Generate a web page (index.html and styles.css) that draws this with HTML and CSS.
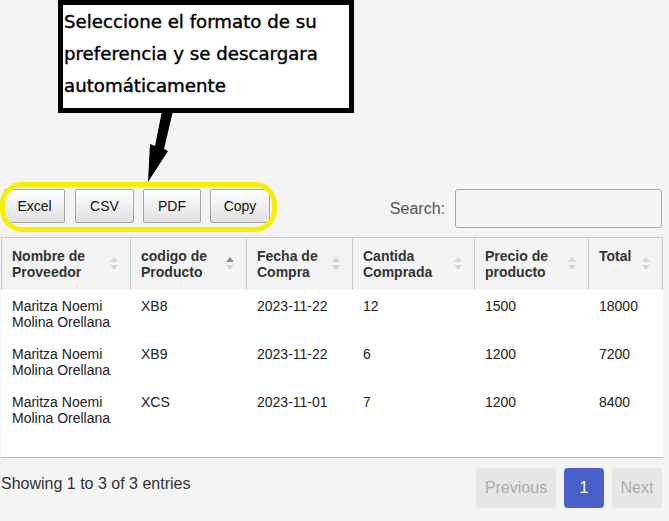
FILE: index.html
```html
<!DOCTYPE html>
<html lang="es">
<head>
<meta charset="utf-8">
<title>Compras</title>
<link rel="stylesheet" href="styles.css">
</head>
<body>
<div class="page">
  <div class="callout">Seleccione el formato de su<br>preferencia y se descargara<br>automáticamente</div>
  <svg class="arrow" width="60" height="80" viewBox="140 108 60 80" aria-hidden="true">
    <polygon points="162,111 173,111 164,149 168,151 148,182 150,144 155,146" fill="#000"/>
  </svg>
  <div class="highlight"></div>

  <div class="toolbar">
    <div class="buttons">
      <button class="dt-btn b-excel">Excel</button>
      <button class="dt-btn b-csv">CSV</button>
      <button class="dt-btn b-pdf">PDF</button>
      <button class="dt-btn b-copy">Copy</button>
    </div>
    <label class="search">Search:<input type="search"></label>
  </div>

  <div class="table-wrap">
    <table class="grid">
      <colgroup>
        <col class="c1"><col class="c2"><col class="c3"><col class="c4"><col class="c5"><col class="c6">
      </colgroup>
      <thead>
        <tr>
          <th>Nombre de Proveedor</th>
          <th class="asc">codigo de Producto</th>
          <th>Fecha de Compra</th>
          <th>Cantida Comprada</th>
          <th>Precio de producto</th>
          <th class="last">Total</th>
        </tr>
      </thead>
      <tbody>
        <tr><td>Maritza Noemi Molina Orellana</td><td>XB8</td><td>2023-11-22</td><td>12</td><td>1500</td><td>18000</td></tr>
        <tr><td>Maritza Noemi Molina Orellana</td><td>XB9</td><td>2023-11-22</td><td>6</td><td>1200</td><td>7200</td></tr>
        <tr><td>Maritza Noemi Molina Orellana</td><td>XCS</td><td>2023-11-01</td><td>7</td><td>1200</td><td>8400</td></tr>
      </tbody>
    </table>
  </div>

  <div class="footer">
    <div class="info">Showing 1 to 3 of 3 entries</div>
    <div class="pager">
      <span class="pg pg-prev disabled">Previous</span>
      <span class="pg pg-cur">1</span>
      <span class="pg pg-next disabled">Next</span>
    </div>
  </div>
</div>
</body>
</html>
```

FILE: styles.css
```css
* { box-sizing: border-box; }

html, body {
  margin: 0;
  background: #f4f4f4;
  font-family: "Liberation Sans", Arial, sans-serif;
  color: #333;
}

.page {
  position: relative;
  width: 669px;
  padding-top: 189px;
}

/* annotation overlay */
.callout {
  position: absolute;
  left: 58px;
  top: 0;
  width: 296px;
  height: 113px;
  border: 5px solid #000;
  background: #fff;
  padding: 1px 0 0 1px;
  font-family: "DejaVu Sans", sans-serif;
  font-size: 18.2px;
  line-height: 32px;
  color: #000;
  -webkit-text-stroke: 0.4px #000;
  white-space: nowrap;
  z-index: 3;
}

.arrow {
  position: absolute;
  left: 140px;
  top: 108px;
  z-index: 4;
}

.highlight {
  position: absolute;
  left: 0;
  top: 182px;
  width: 277px;
  height: 50px;
  border: 5px solid #f6ef00;
  border-radius: 22px;
  z-index: 2;
  pointer-events: none;
}

/* toolbar */
.toolbar {
  display: flex;
  justify-content: space-between;
  align-items: flex-start;
  padding: 0 7px 0 4px;
  height: 39px;
}

.buttons {
  display: flex;
  gap: 9px;
}

.dt-btn {
  height: 34px;
  padding: 0;
  border: 1px solid #a6a6a6;
  border-radius: 2px;
  background: linear-gradient(to bottom, #ffffff 0%, #e0e0e0 100%);
  font-family: "Liberation Sans", Arial, sans-serif;
  font-size: 14px;
  color: #111;
  text-align: center;
}
.b-excel { width: 61px; margin-right: 1px; }
.b-csv { width: 59px; }
.b-pdf { width: 58px; }
.b-copy { width: 60px; }

.search {
  display: flex;
  align-items: center;
  font-size: 16px;
  color: #555;
}
.search input {
  margin-left: 10px;
  width: 207px;
  height: 39px;
  border: 1px solid #aaa;
  border-radius: 3px;
  background: transparent;
  padding: 4px;
}

/* table */
.table-wrap {
  margin: 9px 0 0 1px;
  width: 662px;
  height: 221px;
  background: #fff;
  border-bottom: 1px solid #bbb;
}

.grid {
  width: 662px;
  table-layout: fixed;
  border-collapse: separate;
  border-spacing: 0;
}
.c1 { width: 129px; }
.c2 { width: 116px; }
.c3 { width: 106px; }
.c4 { width: 122px; }
.c5 { width: 114px; }
.c6 { width: 75px; }

.grid th {
  position: relative;
  background: #f4f4f4;
  border-top: 1px solid #ccc;
  border-left: 1px solid #ccc;
  padding: 10px 26px 10px 10px;
  text-align: left;
  vertical-align: top;
  font-size: 14px;
  font-weight: bold;
  line-height: 16px;
  color: #333;
}
.grid th.last { border-right: 1px solid #ccc; }

.grid th::before,
.grid th::after {
  content: "";
  position: absolute;
  right: 12px;
  width: 0;
  height: 0;
  border-left: 4px solid transparent;
  border-right: 4px solid transparent;
}
.grid th::before {
  top: calc(50% - 7px);
  border-bottom: 5px solid #d4d4d4;
}
.grid th::after {
  top: calc(50% + 1px);
  border-top: 5px solid #d4d4d4;
}
.grid th.asc::before { border-bottom-color: #8c8c8c; }

.grid td {
  border-left: 1px solid transparent;
  padding: 8px 10px;
  vertical-align: top;
  font-size: 14px;
  line-height: 16px;
  color: #222;
}

/* footer */
.footer {
  display: flex;
  justify-content: space-between;
  align-items: flex-start;
  padding: 10px 7px 0 1px;
}
.info {
  padding-top: 7px;
  font-size: 16px;
  line-height: 18px;
  color: #333;
}
.pager {
  display: flex;
  gap: 8px;
}
.pg {
  display: flex;
  align-items: center;
  justify-content: center;
  height: 40px;
  border-radius: 4px;
  font-size: 16px;
}
.pg.disabled {
  background: #e6e6e6;
  color: #adadad;
}
.pg-prev { width: 80px; }
.pg-cur { width: 40px; background: #485fc7; color: #fff; }
.pg-next { width: 50px; }
```
